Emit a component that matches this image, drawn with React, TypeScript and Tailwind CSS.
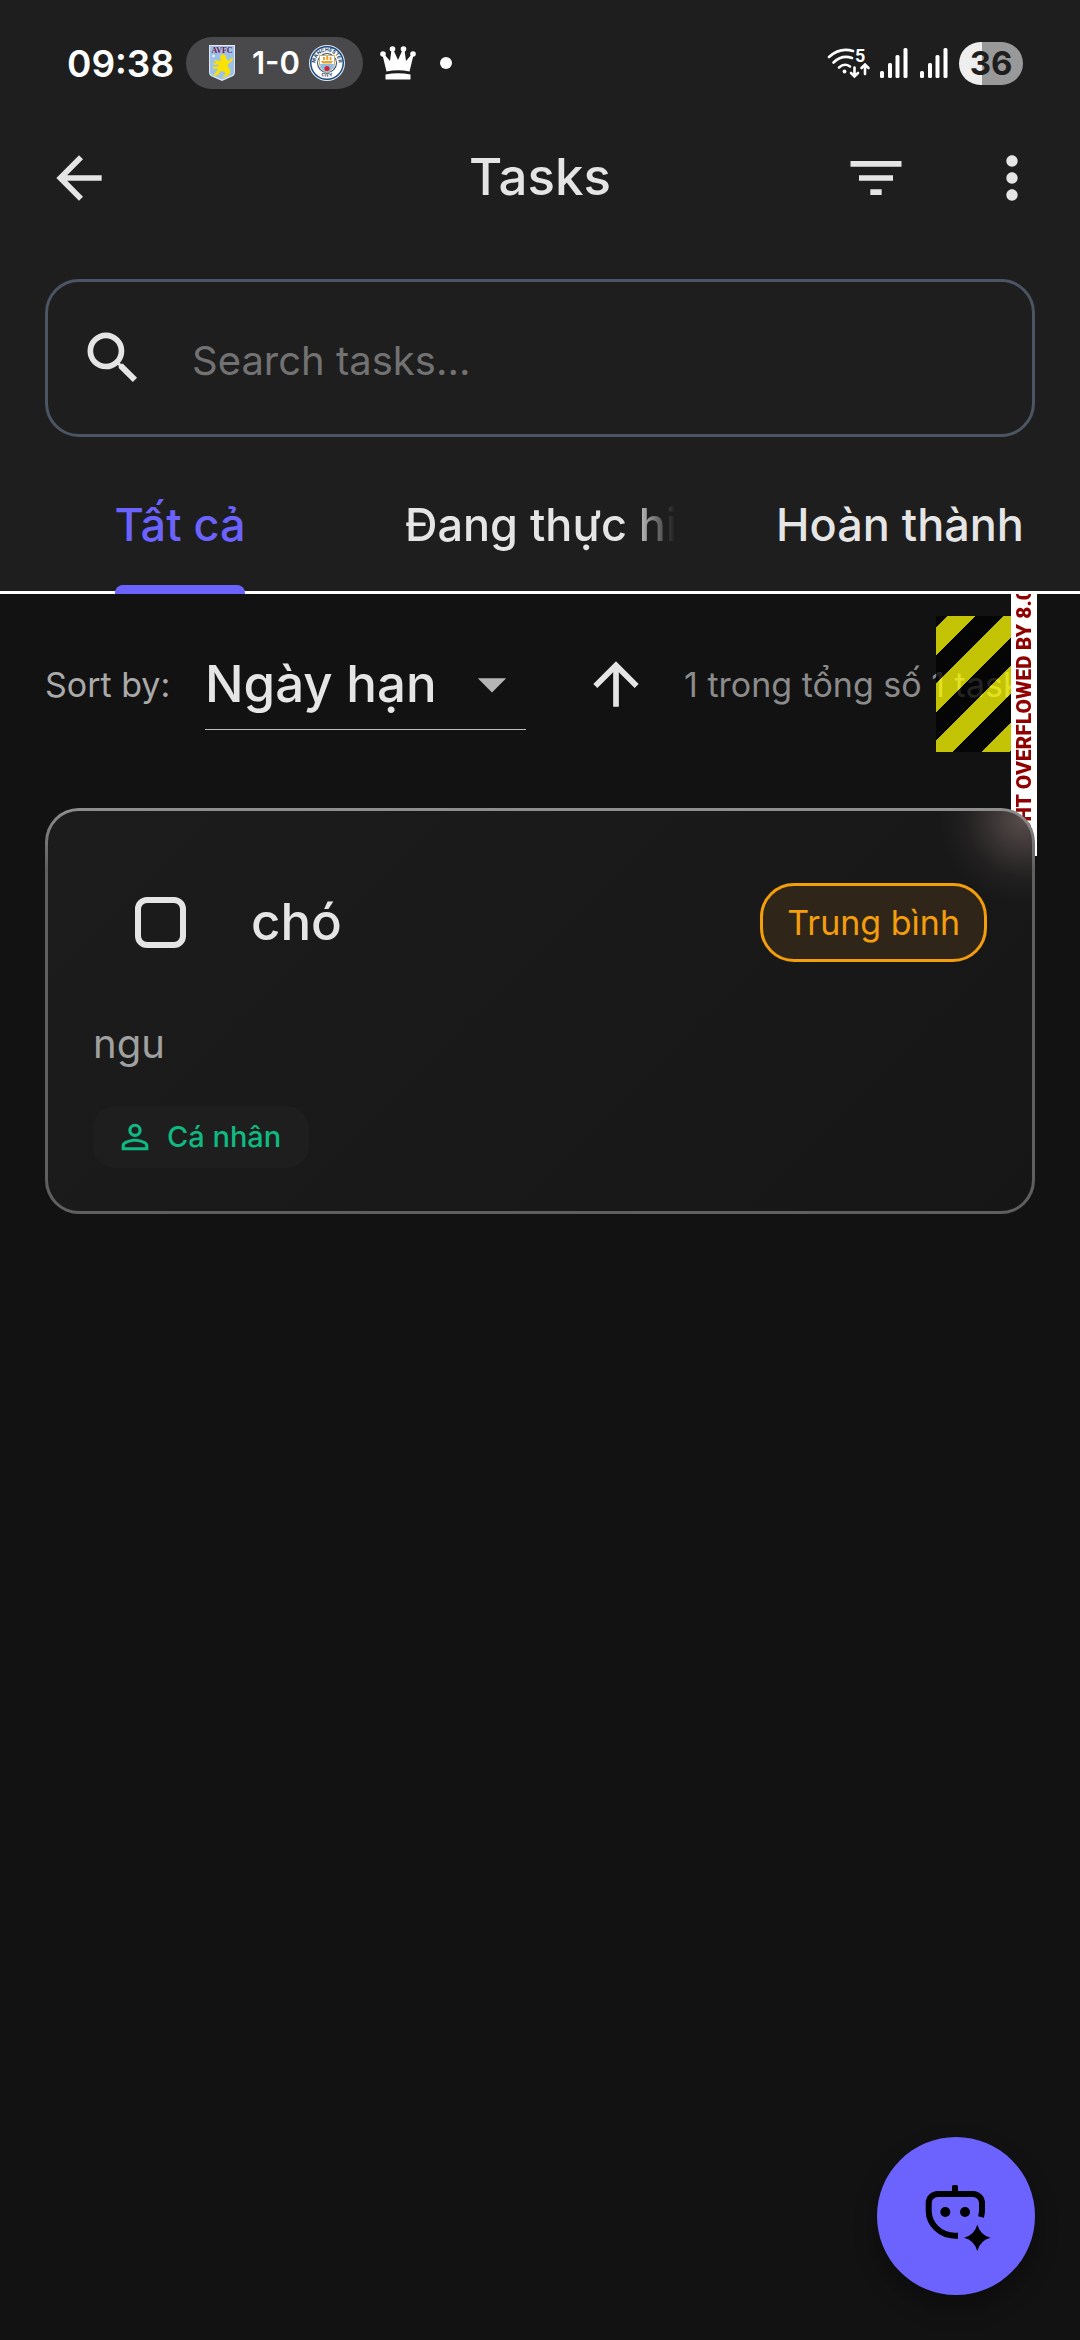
import { useState } from "react";
import {
  MdArrowBack,
  MdArrowDropDown,
  MdArrowUpward,
  MdFilterList,
  MdMoreVert,
  MdPersonOutline,
  MdSearch,
} from "react-icons/md";

const tabs = ["Tất cả", "Đang thực hiện", "Hoàn thành"];

function VillaBadge() {
  return (
    <svg viewBox="0 0 26 36" className="h-9 w-[26px]" aria-label="Aston Villa">
      <path d="M0 0H26V27Q26 31 22 32L13 36L4 32Q0 31 0 27Z" fill="#dfe9f5" />
      <path d="M1 1H25V27Q25 30 21 31L13 34.5L5 31Q1 30 1 27Z" fill="#9dc1e8" />
      <text x="13" y="8" textAnchor="middle" fontSize="8" fontWeight="700" fontFamily="Liberation Serif, serif" fill="#7a1644">AVFC</text>
      <circle cx="4.500" cy="11" r="1.200" fill="#fff" />
      <path d="M11 11L14 9L17 11L17.500 14.500L20 16L21 14L24 12.500L23 16L20.500 18L18.500 20L19.500 23L21.500 25L21 28.500L18.500 31L13.500 33L14 31L17 29L15 26.500L11.500 26L10 29L6.500 31L4 29.500L7 27.500L9 24L7 23.500L5 24L3 22.500L6 21.500L9.500 21.500L9.500 19.500L6 20L3.500 18L7.500 17.500L4.500 15L8 15.500L12 16Z" fill="#fbe205" />
    </svg>
  );
}

function CityBadge() {
  return (
    <svg viewBox="0 0 36 36" className="size-9" aria-label="Manchester City">
      <defs>
        <path id="ring-top" d="M6.500 18a11.500 11.500 0 0 1 23 0" />
        <path id="ring-bottom" d="M4 18a14 14 0 0 0 28 0" />
      </defs>
      <circle cx="18" cy="18" r="18" fill="#dfe9f5" />
      <circle cx="18" cy="18" r="17" fill="#1d4a80" />
      <circle cx="18" cy="18" r="15.500" fill="#fff" />
      <text fontSize="5" fontWeight="700" fontFamily="Inter, sans-serif" fill="#1d3f6e" textAnchor="middle">
        <textPath href="#ring-top" startOffset="50%">MANCHESTER</textPath>
      </text>
      <text fontSize="5" fontWeight="700" fontFamily="Inter, sans-serif" fill="#1d3f6e" textAnchor="middle">
        <textPath href="#ring-bottom" startOffset="50%">CITY</textPath>
      </text>
      <circle cx="18" cy="18" r="10" fill="#1d4a80" />
      <circle cx="18" cy="18" r="9" fill="#fff" />
      <path d="M10.500 10.500H25.500V19Q25 25 18 28Q11 25 10.500 19Z" fill="#fff" stroke="#c9a13b" strokeWidth="0.800" />
      <path d="M11 19H25Q24.500 25 18 27.500Q11.500 25 11 19Z" fill="#8dbde6" />
      <path d="M12 16H24L22.500 18.500H13.500ZM14 12h2v3h-2zM17.200 11h2v4h-2zM20.500 12h2v3h-2z" fill="#f0a32c" />
      <circle cx="18" cy="23.500" r="2.600" fill="#d5232f" />
    </svg>
  );
}

function Crown() {
  return (
    <svg viewBox="0 0 36 34" className="h-[34px] w-9" fill="#fff" aria-hidden="true">
      <circle cx="3" cy="8" r="2.800" />
      <circle cx="12.500" cy="3" r="2.800" />
      <circle cx="23.500" cy="3" r="2.800" />
      <circle cx="33" cy="8" r="2.800" />
      <path d="M2.500 9L4 8L10 15L11.500 4H13.500L18 14L22.500 4H24.500L26 15L32 8L33.500 9L29.500 25.500Q18 23 6.500 25.500Z" />
      <path d="M5.500 28.500Q18 26 30.500 28.500V33.500H5.500Z" />
    </svg>
  );
}

function Wifi() {
  return (
    <svg viewBox="0 0 44 32" className="h-8 w-11" fill="none" stroke="#fff" strokeWidth="2.600" strokeLinecap="round" aria-label="Wi-Fi">
      <path d="M2 10Q13 0 26 4" />
      <path d="M6.500 15.500Q15 7.500 25 11" />
      <path d="M12 20.500Q17.500 15.500 23 19.500" />
      <circle cx="17.500" cy="24.500" r="1.900" fill="#fff" stroke="none" />
      <path d="M27.500 20.500V29M24 26L27.500 29.500L31 26" />
      <path d="M38 27V18.500M34.500 21L38 17.500L41.500 21" />
      <text x="28" y="15" fontSize="18" fontWeight="700" fontFamily="Roboto, sans-serif" fill="#fff" stroke="none">5</text>
    </svg>
  );
}

function Signal() {
  return (
    <svg viewBox="0 0 28 30" className="h-[30px] w-7" fill="#fff" aria-label="Signal">
      <rect x="0" y="23" width="4" height="7" rx="1.500" />
      <rect x="8" y="15" width="4" height="15" rx="1.500" />
      <rect x="15.500" y="7" width="4" height="23" rx="1.500" />
      <rect x="23.500" y="0" width="4" height="30" rx="1.500" />
    </svg>
  );
}

function BotIcon() {
  return (
    <svg viewBox="0 0 70 70" className="size-[70px]" aria-hidden="true">
      <rect x="31" y="4" width="6" height="9" rx="1.500" fill="#000" />
      <path d="M37 54.700H34A26.500 25 0 0 1 7.700 30V22A9 9 0 0 1 16.700 13H52A9 9 0 0 1 61 22V29Q61 32 60 36" fill="none" stroke="#000" strokeWidth="6" />
      <circle cx="24.300" cy="31" r="5" />
      <circle cx="44" cy="31" r="5" />
      <path d="M56.300 43.500Q59 54 69.500 56.700Q59 59.400 56.300 70Q53.600 59.400 43 56.700Q53.600 54 56.300 43.500Z" />
    </svg>
  );
}

function StatusBar() {
  return (
    <div className="flex h-[99px] items-center justify-between pt-[27px] pr-[57px] pl-[67px]">
      <div className="flex h-[72px] items-center">
        <span className="w-[119px] text-[37px] leading-none font-semibold text-white">09:38</span>
        <div className="flex h-[52px] w-[177px] items-center justify-between rounded-full bg-[#49494b] pr-[18px] pl-[23px]">
          <VillaBadge />
          <span className="pl-2 text-[31px] leading-[34px] font-semibold text-white">1-0</span>
          <CityBadge />
        </div>
        <div className="flex items-center gap-6 pl-[17px]">
          <Crown />
          <span className="size-3 rounded-full bg-white" />
        </div>
      </div>
      <div className="flex items-center">
        <Wifi />
        <div className="flex gap-3 pr-[11px] pl-[9px]">
          <Signal />
          <Signal />
        </div>
        <span className="flex h-[43px] w-16 items-center justify-center rounded-full bg-linear-to-r from-[#eeeeee] from-36% to-[#999999] to-36% text-[33px] leading-none font-bold text-[#1e1e1e]">
          36
        </span>
      </div>
    </div>
  );
}

function AppBar() {
  return (
    <div className="grid h-[157px] grid-cols-[1fr_auto_1fr] items-center px-[34px] text-[#e5e5e5]">
      <button type="button" aria-label="Back" className="justify-self-start px-[11px]">
        <MdArrowBack className="size-[68px]" />
      </button>
      <h1 className="pb-0.5 text-[51px] leading-none font-medium">Tasks</h1>
      <div className="flex gap-[68px] justify-self-end">
        <button type="button" aria-label="Filter">
          <MdFilterList className="size-[68px]" />
        </button>
        <button type="button" aria-label="More">
          <MdMoreVert className="size-[68px]" />
        </button>
      </div>
    </div>
  );
}

function TabBar() {
  const [active, setActive] = useState(0);
  return (
    <div role="tablist" className="grid h-[135px] grid-cols-3 border-b-[3px] border-white">
      {tabs.map((label, i) => (
        <button
          key={label}
          type="button"
          role="tab"
          aria-selected={i === active}
          onClick={() => setActive(i)}
          className={
            i === active
              ? "flex h-[135px] min-w-0 justify-center px-[45px] text-[45px] leading-[132px] font-medium text-[#6c63ff]"
              : "flex h-[135px] min-w-0 justify-center px-[45px] text-[45px] leading-[132px] font-medium text-[#e5e5e5]"
          }
        >
          {i === active ? (
            <span className="relative h-full whitespace-nowrap">
              {label}
              <span className="absolute inset-x-0 bottom-0 h-[9px] rounded-t-lg bg-[#6c63ff]" />
            </span>
          ) : i === 1 ? (
            <span className="w-full overflow-hidden mask-r-from-[calc(100%-45px)] text-left whitespace-nowrap">
              {label}
            </span>
          ) : (
            <span className="whitespace-nowrap">{label}</span>
          )}
        </button>
      ))}
    </div>
  );
}

function SortRow() {
  return (
    <div className="relative mx-[45px] my-[22px] flex h-[136px] items-center">
      <label htmlFor="sort" className="w-[160px] shrink-0 text-[34px] text-[#aaaaaa]">
        Sort by:
      </label>
      <div className="relative flex h-[92px] w-[321px] shrink-0 items-center border-b border-[#bdbdbd]">
        <select id="sort" className="h-full w-full appearance-none bg-transparent pt-0.5 text-[51px] font-medium text-[#e5e5e5]">
          <option>Ngày hạn</option>
        </select>
        <MdArrowDropDown className="pointer-events-none absolute right-0 size-[68px] text-[#b5b5b5]" />
      </div>
      <button type="button" aria-label="Ascending" className="ml-[56px] shrink-0 text-[#e5e5e5]">
        <MdArrowUpward className="size-[68px]" />
      </button>
      <span className="ml-[34px] text-[34px] whitespace-nowrap text-[#8b8b8b]">1 trong tổng số 1 task</span>
      <div className="absolute top-0 right-0 h-full w-[99px] bg-[repeating-linear-gradient(135deg,#000000bf_0px,#000000bf_8px,#ffff00bf_8px,#ffff00bf_28px,#000000bf_28px,#000000bf_40px)]" />
      <div className="absolute -top-[104px] -right-[2px] flex h-[344px] w-[26px] rotate-180 items-center justify-center bg-white font-['Roboto',sans-serif] text-[21px] leading-[26px] font-black whitespace-nowrap text-[#900000] [writing-mode:vertical-rl]">
        RIGHT OVERFLOWED BY 8.0 PIXELS
      </div>
    </div>
  );
}

function TaskCard() {
  return (
    <article className="relative mx-[45px] mt-[34px] rounded-[34px] bg-linear-to-b from-[#8f8f8f] to-[#5f5f5f] to-15% p-[3px]">
      <div className="rounded-[31px] bg-[radial-gradient(circle_at_calc(100%-8px)_8px,#5a4d4d_0px,#3a3434_32px,#222020_58px,transparent_85px),linear-gradient(135deg,#1c1c1c,#161616)] px-[45px] pt-[37px] pb-[43px]">
        <div className="flex h-[148px] items-center">
          <input
            type="checkbox"
            aria-label="chó"
            className="ml-[42px] size-[51px] appearance-none rounded-xl border-[6px] border-[#e5e5e5] checked:bg-[#6c63ff]"
          />
          <h2 className="flex-1 pl-[65px] text-[51px] font-medium text-[#e5e5e5]">chó</h2>
          <span className="rounded-[34px] border-[3px] border-[#f59e0b] bg-[#2f2619] px-6 text-[34px] leading-[73px] text-[#f59e0b]">
            Trung bình
          </span>
        </div>
        <p className="mt-5 text-[40px] leading-[56px] text-[#a0a0a0]">ngu</p>
        <div className="mt-[34px] flex h-[62px] w-fit items-center gap-3 rounded-[22px] bg-[#1e1e1e] pr-7 pl-[22px] text-[#10b981]">
          <MdPersonOutline className="size-10" />
          <span className="text-[29px] font-medium">Cá nhân</span>
        </div>
      </div>
    </article>
  );
}

export default function App() {
  return (
    <div className="flex min-h-screen flex-col bg-[#121212] font-['Inter',sans-serif]">
      <header className="relative z-10 bg-[#1e1e1e]">
        <StatusBar />
        <AppBar />
        <label className="mx-[45px] mt-[23px] mb-[22px] flex h-[158px] items-center rounded-[34px] border-[3px] border-[#4b5563] pl-[31px]">
          <MdSearch className="size-[68px] shrink-0 text-[#e5e5e5]" />
          <input
            type="text"
            aria-label="Search tasks"
            placeholder="Search tasks..."
            className="h-full w-full bg-transparent pt-1 pl-[45px] text-[40px] text-[#e5e5e5] outline-none placeholder:text-[#727272]"
          />
        </label>
        <TabBar />
      </header>
      <main className="flex flex-1 flex-col">
        <SortRow />
        <TaskCard />
      </main>
      <button
        type="button"
        aria-label="Assistant"
        className="fixed right-[45px] bottom-[45px] flex size-[158px] items-center justify-center rounded-full bg-[#6c63ff] shadow-[0_12px_24px_#00000055]"
      >
        <BotIcon />
      </button>
    </div>
  );
}
